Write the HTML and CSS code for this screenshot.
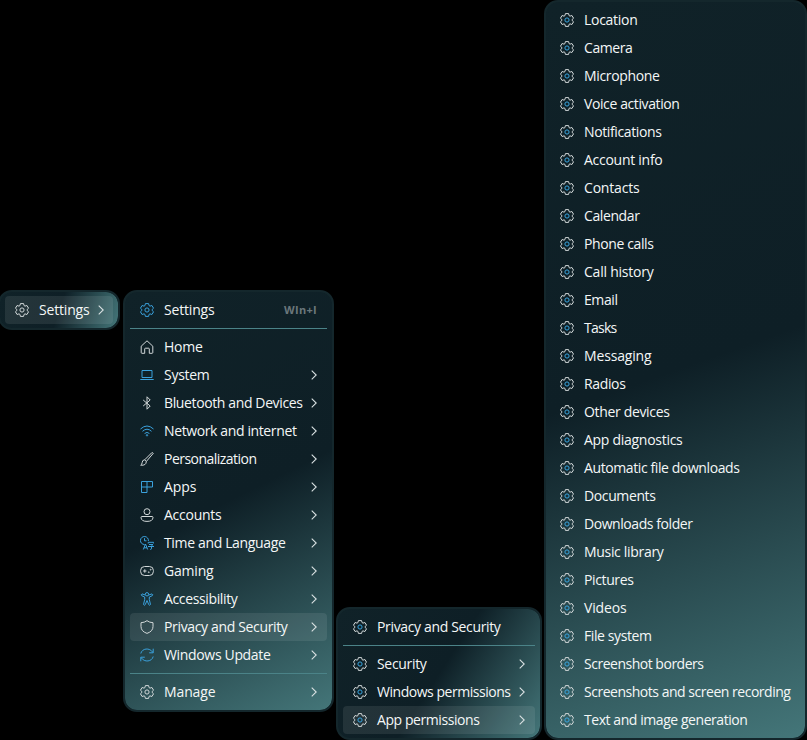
FILE: index.html
```
<!DOCTYPE html>
<html lang="en">
<head>
<meta charset="utf-8">
<title>Settings menu</title>
<link rel="stylesheet" href="styles.css">
</head>
<body>
<svg class="defs" width="0" height="0">
  <symbol id="gear" viewBox="0 0 14 14"><path class="outer" d="M5.4.6h3.2l.45 2 .95.55 1.95-.65 1.6 2.75L12.050 6.600v.8l1.500 1.350-1.600 2.750-1.950-.65-.95.55-.45 2H5.400l-.45-2-.95-.55-1.950.65L.45 8.750l1.500-1.350v-.8L.45 5.250l1.600-2.750 1.950.65.95-.55z"/><circle class="inner" cx="7" cy="7" r="2.100"/></symbol>
  <symbol id="home" viewBox="0 0 14 14"><path d="M1.200 6.200 7 .8l5.800 5.400v6.300q0 .8-.8.8H9.300V9q0-.8-.8-.8h-3q-.8 0-.8.8v4.300H2q-.8 0-.8-.8z"/></symbol>
  <symbol id="laptop" viewBox="0 0 14 14"><path d="M2 2.500h10v7H2zM.3 11.500h13.400"/></symbol>
  <symbol id="bluetooth" viewBox="0 0 14 14"><path d="m3.200 4 7 6L7 13.200V.8L10.200 4l-7 6"/></symbol>
  <symbol id="wifi" viewBox="0 0 14 14"><path d="M.5 5q6.500-6 13 0M2.500 7.300q4.500-4.200 9 0M4.600 9.500q2.400-2.200 4.800 0"/><circle cx="7" cy="11.300" r=".7"/></symbol>
  <symbol id="brush" viewBox="0 0 14 14"><path d="M4.700 7.800 11.700.8q1.200-.5 1.600.5L6.300 9.500zM4.700 7.800Q2.200 8 2.200 10.500 2 12.500.7 13.200q5.600.5 5.600-3.700"/></symbol>
  <symbol id="apps" viewBox="0 0 14 14"><path d="M1.500 1.500h11v5.500h-5.500v5.500H1.500zM7 1.500v5.500M1.500 7h5.500"/></symbol>
  <symbol id="user" viewBox="0 0 14 14"><circle cx="7" cy="3.700" r="3"/><path d="M2 8.500h10q1 0 1 1-.2 3.900-6 3.900T1 9.500q0-1 1-1z"/></symbol>
  <symbol id="lang" viewBox="0 0 14 14"><path d="M4.500 8.500A4 4 0 1 1 8.400 5M4.500 2.200v2.600h2M3.300 13.500 5.500 8l2.200 5.500M4 11.800h3M8.200 7.500V6.300h5.500v1.200M9 8.500h4l-1.500 1.300v3q0 .6-1.300.6M8 10.500h6"/></symbol>
  <symbol id="pad" viewBox="0 0 14 14"><rect x=".6" y="2.500" width="12.800" height="9" rx="4"/><path d="M4.800 5.300v3.400M3.100 7h3.400"/><circle cx="10.700" cy="5.700" r=".45"/><circle cx="8.800" cy="8.200" r=".45"/></symbol>
  <symbol id="person" viewBox="0 0 14 14"><circle cx="7" cy="2.300" r="1.700"/><path d="M5.300 3 2 1.900q-1.400.8-.3 1.800l3 1.300v2.500l-1.200 5q.8 1.400 1.700.2L7 8.500l1.800 4.200q.9 1.200 1.700-.2l-1.200-5V5l3-1.300q1.100-1-.3-1.800L8.700 3"/></symbol>
  <symbol id="shield" viewBox="0 0 14 14"><path d="M7 .7q2.500 1.900 6 2V6.500q0 4.800-6 6.900-6-2.100-6-6.900V2.700q3.500-.1 6-2z"/></symbol>
  <symbol id="update" viewBox="0 0 14 14"><path d="M.8 5.500C2 .3 9.500-.8 12.900 4.400M13.200.7v4.100H9.200M13.200 8.500C12 13.700 4.500 14.800 1.100 9.600M.8 13.300V9.200h4"/></symbol>
  <symbol id="chev" viewBox="0 0 6 10"><path d="m.7.600 4.500 4.400-4.500 4.400"/></symbol>
</svg>
<main class="cascade" id="cascade"></main>
<script src="menu.js"></script>
</body>
</html>
```
FILE: menu.js
```
// Each row: [icon, tint, label, has submenu, label width, selected]
const panels = [
  { name: 'root', rows: [['gear', 'light', 'Settings', 1, 49, 1]] },
  { name: 'settings', rows: [
    ['gear', 'blue', 'Settings', 0, 49, 0, 'WIn+I'], null,
    ['home', 'light', 'Home', 0, 37],
    ['laptop', 'blue', 'System', 1, 44],
    ['bluetooth', 'light', 'Bluetooth and Devices', 1, 137],
    ['wifi', 'blue', 'Network and internet', 1, 131],
    ['brush', 'light', 'Personalization', 1, 91],
    ['apps', 'blue', 'Apps', 1, 31],
    ['user', 'light', 'Accounts', 1, 56],
    ['lang', 'blue', 'Time and Language', 1, 120],
    ['pad', 'light', 'Gaming', 1, 48],
    ['person', 'blue', 'Accessibility', 1, 72],
    ['shield', 'light', 'Privacy and Security', 1, 122, 1],
    ['update', 'blue', 'Windows Update', 1, 105], null,
    ['gear', 'light', 'Manage', 1, 50]] },
  { name: 'privacy', rows: [
    ['gear', 'duo', 'Privacy and Security', 0, 122], null,
    ['gear', 'duo', 'Security', 1, 48],
    ['gear', 'duo', 'Windows permissions', 1, 132],
    ['gear', 'duo', 'App permissions', 1, 101, 1]] },
  { name: 'permissions', rows: [
    ['Location', 52], ['Camera', 47], ['Microphone', 74], ['Voice activation', 94],
    ['Notifications', 76], ['Account info', 77], ['Contacts', 54], ['Calendar', 54],
    ['Phone calls', 68], ['Call history', 68], ['Email', 32], ['Tasks', 31],
    ['Messaging', 66], ['Radios', 40], ['Other devices', 84], ['App diagnostics', 97],
    ['Automatic file downloads', 154], ['Documents', 70], ['Downloads folder', 107],
    ['Music library', 78], ['Pictures', 48], ['Videos', 41], ['File system', 66],
    ['Screenshot borders', 118], ['Screenshots and screen recording', 205],
    ['Text and image generation', 162]].map(([t, w]) => ['gear', 'duo', t, 0, w]) }
];
const row = r => !r ? '<hr class="separator">' :
  `<div class="item${r[5] ? ' selected' : ''}"><svg class="icon ${r[1]}"><use href="#${r[0]}"/></svg>` +
  `<span class="label" data-width="${r[4]}">${r[2]}</span>` +
  (r[6] ? `<span class="shortcut">${r[6]}</span>` : '') +
  (r[3] ? '<svg class="chevron"><use href="#chev"/></svg>' : '') + '</div>';
document.getElementById('cascade').innerHTML = panels.map(p =>
  `<nav class="panel ${p.name}">${p.rows.map(row).join('')}</nav>`).join('');
document.querySelectorAll('.label').forEach(el => {
  const natural = el.getBoundingClientRect().width;
  const space = (Number(el.dataset.width) + 1.5 - natural) / el.textContent.length;
  el.style.letterSpacing = space.toFixed(3) + 'px';
});
```
FILE: styles.css
```
* { box-sizing: border-box; }
body { margin: 0; background: #000; overflow: hidden; font: 14px/28px "Open Sans", "Noto Sans", sans-serif; color: #f4f7f7; }
.defs { display: block; height: 0; }
.cascade { display: flex; align-items: flex-start; width: 807px; height: 740px; }
.panel {
  flex: none; padding: 4px; border: 2px solid #14272c; border-radius: 14px;
  background: linear-gradient(var(--angle), #102228 0%, #0e1f26 50%, #447679 100%) padding-box, #14272c;
}
.root { --angle: 108deg; width: 122px; margin: 290px 3px 0 -2px; }
.settings { --angle: 153.400deg; width: 211px; margin: 290px 2px 0 0; }
.privacy { --angle: 123deg; width: 206px; margin: 607px 2px 0 0; }
.permissions { --angle: 160.500deg; width: 263px; }
.item { display: flex; align-items: center; height: 28px; padding: 0 10px; border-radius: 4px; white-space: nowrap; }
.root .item { padding-right: 9px; }
.root .item, .settings .item, .privacy .item { margin: 0 1px; }
.selected { background: rgba(255, 255, 255, .085); }
.icon { flex: none; width: 14px; height: 14px; margin-right: 10px; overflow: visible; fill: none; stroke: #d2d8d9; stroke-width: 1; stroke-linejoin: round; }
.icon.blue { stroke: #3ba1dc; }
.duo .inner, .icon.duo { --hub: #39a5df; }
.inner { stroke: var(--hub, currentStroke); stroke-width: 1; }
.icon.duo { stroke: #d2d8d9; }
.chevron { flex: none; width: 6px; height: 10px; margin-left: auto; fill: none; stroke: #d8e0e1; stroke-width: 1.100; }
.shortcut { margin-left: auto; font: 700 11px/28px "Open Sans", sans-serif; color: #6b777b; letter-spacing: .3px; }
.separator { height: 1px; margin: 4px 1px; border: 0; background: #4b8388; }
.permissions .item { padding-left: 10px; }
```
